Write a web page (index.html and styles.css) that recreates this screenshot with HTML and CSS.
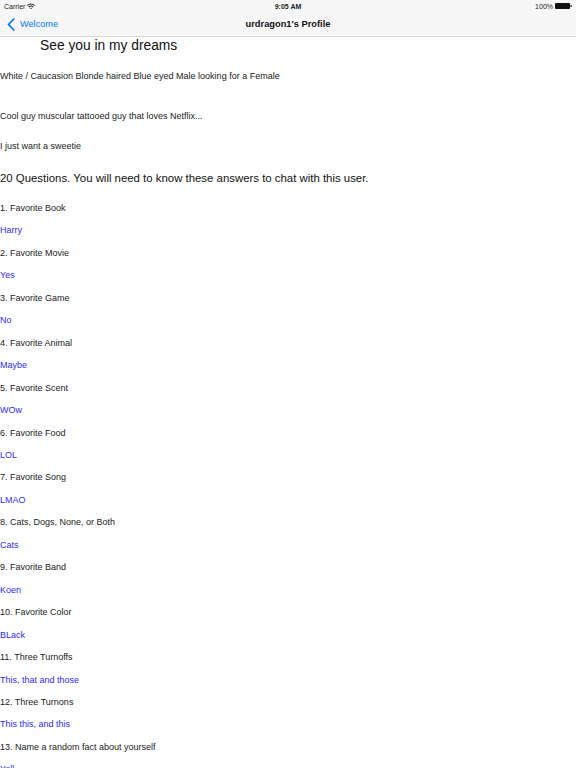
FILE: index.html
```html
<!DOCTYPE html>
<html lang="en">
<head>
  <meta charset="UTF-8" />
  <meta name="viewport" content="width=device-width, initial-scale=1.0" />
  <title>urdragon1's Profile</title>
  <link rel="stylesheet" href="styles.css">
</head>
<body>
  <header class="top">
    <div class="status">
      <span class="carrier">Carrier
        <svg class="wifi" width="8" height="6" viewBox="0 0 8 6"><path d="M0 2.2A5.6 5.6 0 0 1 8 2.2L7.2 3A4.4 4.4 0 0 0 .8 3Z M1.5 3.7A3.5 3.5 0 0 1 6.5 3.7L5.7 4.5A2.3 2.3 0 0 0 2.3 4.5Z M3 5.2A1.4 1.4 0 0 1 5 5.2L4 6Z" fill="#222"/></svg>
      </span>
      <span class="clock">9:05 AM</span>
      <span class="battery">100%
        <svg width="17" height="6" viewBox="0 0 17 6"><rect x="0" y="0" width="15" height="6" rx="1" fill="#111"/><rect x="15.5" y="2" width="1.2" height="2" fill="#111"/></svg>
      </span>
    </div>
    <nav class="navbar">
      <a class="back" href="#">
        <svg width="8" height="13" viewBox="0 0 8 13"><path d="M6.8 1L1.5 6.5l5.3 5.5" fill="none" stroke="#007aff" stroke-width="1.8" stroke-linecap="round" stroke-linejoin="round"/></svg>
        Welcome
      </a>
      <h1 class="title">urdragon1's Profile</h1>
    </nav>
  </header>

  <main class="profile">
    <h2 class="tagline">See you in my dreams</h2>
    <p class="info looks">White / Caucasion Blonde haired Blue eyed Male looking for a Female</p>
    <p class="info about">Cool guy muscular tattooed guy that loves Netflix...</p>
    <p class="info">I just want a sweetie</p>
    <h3 class="qhead">20 Questions. You will need to know these answers to chat with this user.</h3>

    <div id="questions"></div>
  </main>

  <script>
    const answers = [
      ["1. Favorite Book", "Harry"],
      ["2. Favorite Movie", "Yes"],
      ["3. Favorite Game", "No"],
      ["4. Favorite Animal", "Maybe"],
      ["5. Favorite Scent", "WOw"],
      ["6. Favorite Food", "LOL"],
      ["7. Favorite Song", "LMAO"],
      ["8. Cats, Dogs, None, or Both", "Cats"],
      ["9. Favorite Band", "Koen"],
      ["10. Favorite Color", "BLack"],
      ["11. Three Turnoffs", "This, that and those"],
      ["12. Three Turnons", "This this, and this"],
      ["13. Name a random fact about yourself", "Yell"]
    ];

    const list = document.getElementById("questions");
    answers.forEach(([q, a]) => {
      const qp = document.createElement("p");
      qp.className = "question";
      qp.textContent = q;
      const ap = document.createElement("p");
      ap.className = "answer";
      ap.textContent = a;
      list.appendChild(qp);
      list.appendChild(ap);
    });
  </script>
</body>
</html>
```

FILE: styles.css
```css
body {
  margin: 0;
  font-family: 'Liberation Sans', Arial, sans-serif;
  background: #fff;
  color: #222;
}
.top {
  background: #f7f7f7;
  border-bottom: 1px solid #d8d8d8;
}
.status {
  height: 12px;
  display: flex;
  justify-content: space-between;
  align-items: center;
  padding: 0 4px;
  font-size: 7px;
  color: #222;
  position: relative;
}
.carrier, .battery {
  display: flex;
  align-items: center;
  gap: 2px;
}
.clock {
  position: absolute;
  left: 0;
  right: 0;
  text-align: center;
  font-weight: bold;
}
.navbar {
  height: 24px;
  display: flex;
  align-items: center;
  position: relative;
}
.back {
  display: flex;
  align-items: center;
  gap: 5px;
  padding-left: 7px;
  color: #007aff;
  text-decoration: none;
  font-size: 9.2px;
}
.title {
  position: absolute;
  left: 0;
  right: 0;
  margin: 0;
  text-align: center;
  font-size: 9.3px;
  font-weight: bold;
  color: #111;
  pointer-events: none;
}
.profile {
  padding-bottom: 20px;
}
.tagline {
  margin: 0;
  padding: 0 0 0 40px;
  font-size: 13.8px;
  font-weight: normal;
  line-height: 17px;
  color: #111;
}
.info {
  margin: 0;
  font-size: 9px;
  line-height: 12px;
  color: #222;
}
.looks {
  margin-top: 16px;
}
.about {
  margin-top: 28px;
  margin-bottom: 18px;
}
.qhead {
  margin: 19px 0 17px;
  font-size: 11.4px;
  font-weight: normal;
  line-height: 14px;
  color: #111;
}
.question,
.answer {
  margin: 0;
  height: 22.46px;
  font-size: 9px;
  line-height: 12px;
}
.answer {
  color: #2b2bff;
}
```
